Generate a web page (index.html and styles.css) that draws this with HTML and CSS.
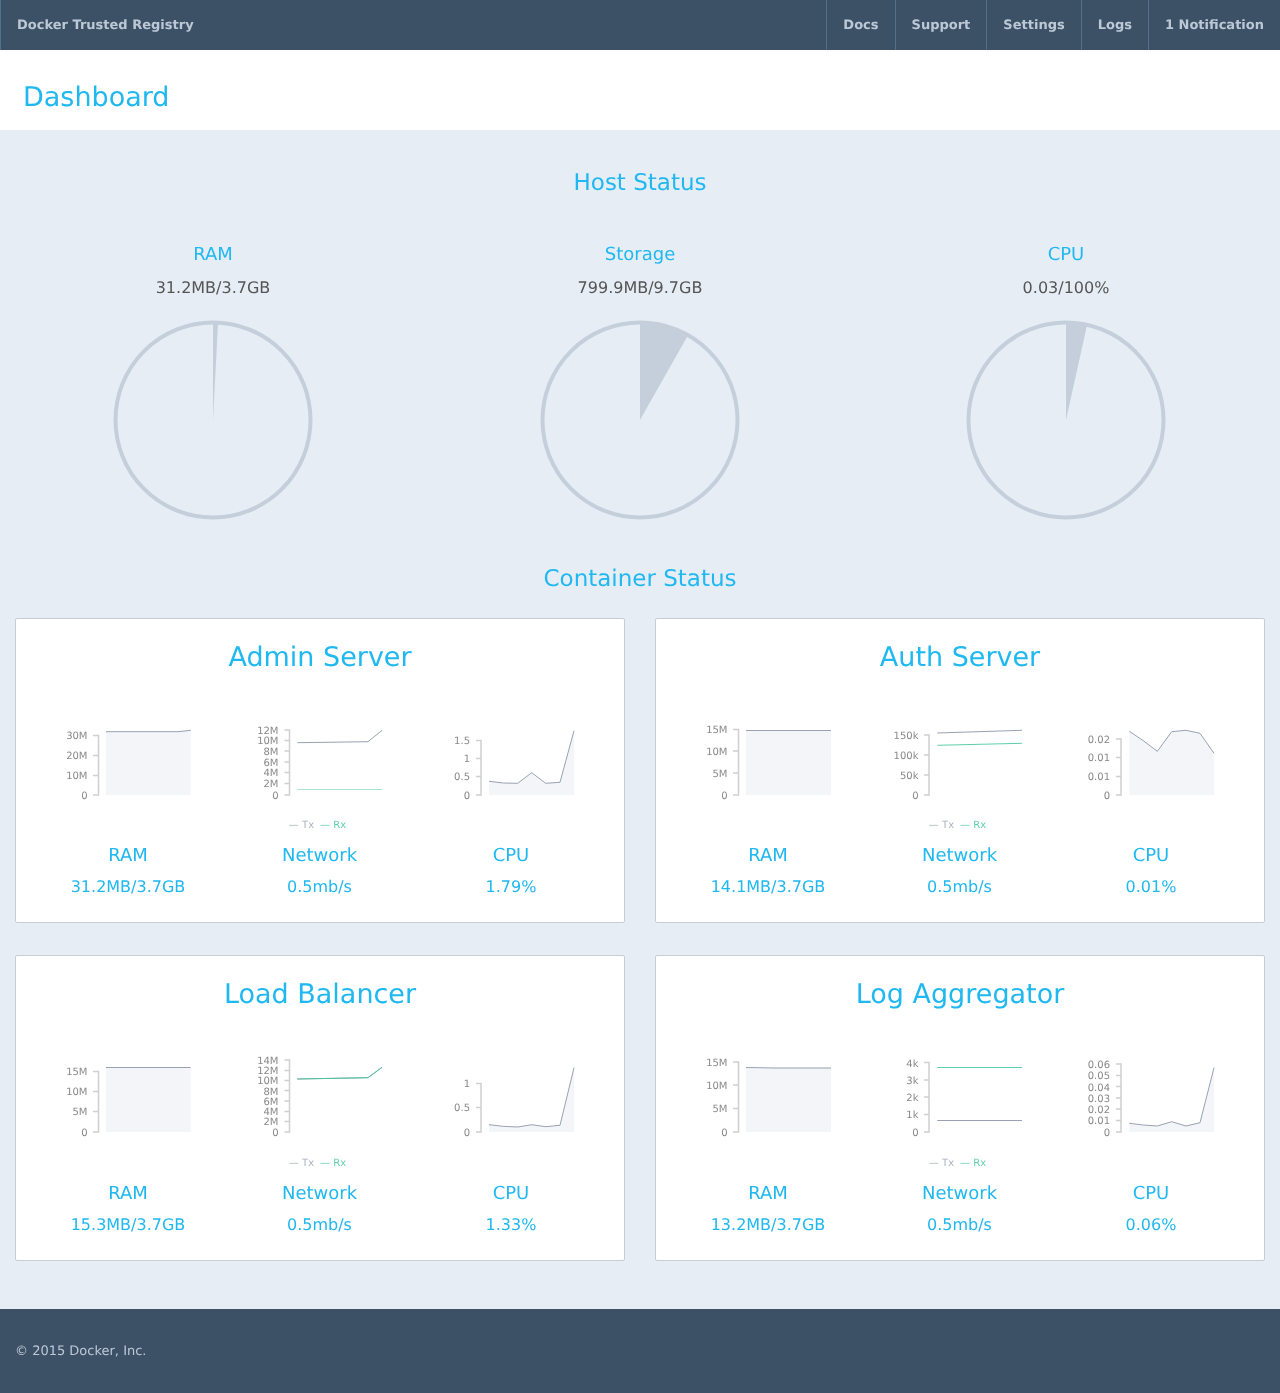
FILE: index.html

```html
<!DOCTYPE html>
<html lang="en">
<head>
  <meta charset="UTF-8">
  <meta name="viewport" content="width=device-width, initial-scale=1.0">
  <title>Docker Trusted Registry</title>
  <link rel="stylesheet" href="styles.css">
</head>
<body>

  <!-- Top bar -->
  <div class="topbar">
    <a class="brand">Docker Trusted Registry</a>
    <div class="nav">
      <a class="nav-item">Docs</a>
      <a class="nav-item">Support</a>
      <a class="nav-item">Settings</a>
      <a class="nav-item">Logs</a>
      <a class="nav-item">1 Notification</a>
    </div>
  </div>

  <div class="page-title">Dashboard</div>

  <div class="content">

    <!-- Host status -->
    <div class="section-title host-title">Host Status</div>
    <div class="host-row">
      <div class="host-col">
        <div class="host-label">RAM</div>
        <div class="host-value">31.2MB/3.7GB</div>
        <svg class="pie" viewBox="0 0 200 200">
          <circle class="pie-ring" cx="100" cy="100" r="97.5"/>
          <path class="pie-slice" d="M100 100 L100 4 A96 96 0 0 1 105 4.1 Z"/>
        </svg>
      </div>
      <div class="host-col">
        <div class="host-label">Storage</div>
        <div class="host-value">799.9MB/9.7GB</div>
        <svg class="pie" viewBox="0 0 200 200">
          <circle class="pie-ring" cx="100" cy="100" r="97.5"/>
          <path class="pie-slice" d="M100 100 L100 4 A96 96 0 0 1 147.3 16.4 Z"/>
        </svg>
      </div>
      <div class="host-col">
        <div class="host-label">CPU</div>
        <div class="host-value">0.03/100%</div>
        <svg class="pie" viewBox="0 0 200 200">
          <circle class="pie-ring" cx="100" cy="100" r="97.5"/>
          <path class="pie-slice" d="M100 100 L100 4 A96 96 0 0 1 120.8 6.3 Z"/>
        </svg>
      </div>
    </div>

    <!-- Container status -->
    <div class="section-title container-title">Container Status</div>
    <div class="cards">

      <div class="card">
        <div class="card-title">Admin Server</div>
        <div class="charts">
          <svg class="chart" viewBox="32 715 192 90">
            <path class="axis" d="M93 735.5 H98.5 V795 H93 M93 755.5 H98.5 M93 775.5 H98.5"/>
            <text class="tick" x="87.5" y="739">30M</text>
            <text class="tick" x="87.5" y="759">20M</text>
            <text class="tick" x="87.5" y="779">10M</text>
            <text class="tick" x="87.5" y="799">0</text>
            <path class="area" d="M106 731.7 L178 731.7 L190.7 730.3 V795 H106 Z"/>
            <polyline class="line" points="106,731.7 178,731.7 190.7,730.3"/>
          </svg>
          <svg class="chart" viewBox="224 715 191 90">
            <path class="axis" d="M284.5 730 H289.5 V795 H284.5 M284.5 740.5 H289.5 M284.5 751 H289.5 M284.5 762 H289.5 M284.5 772.5 H289.5 M284.5 783.5 H289.5"/>
            <text class="tick" x="278.5" y="733.5">12M</text>
            <text class="tick" x="278.5" y="744">10M</text>
            <text class="tick" x="278.5" y="754.5">8M</text>
            <text class="tick" x="278.5" y="765.5">6M</text>
            <text class="tick" x="278.5" y="776">4M</text>
            <text class="tick" x="278.5" y="787">2M</text>
            <text class="tick" x="278.5" y="799">0</text>
            <polyline class="line" points="297.3,742.7 368,741.7 382,730.3"/>
            <polyline class="line-rx faint" points="297.3,789.5 382,789.5"/>
          </svg>
          <svg class="chart" viewBox="415 715 192 90">
            <path class="axis" d="M476 740.5 H481 V795 H476 M476 758.5 H481 M476 776.5 H481"/>
            <text class="tick" x="470" y="744">1.5</text>
            <text class="tick" x="470" y="762">1</text>
            <text class="tick" x="470" y="780">0.5</text>
            <text class="tick" x="470" y="799">0</text>
            <path class="area" d="M489 781.3 L503.3 783 L517.7 783.3 L531.7 772.7 L545.7 783.3 L560 782.3 L574 730.7 V795 H489 Z"/>
            <polyline class="line" points="489,781.3 503.3,783 517.7,783.3 531.7,772.7 545.7,783.3 560,782.3 574,730.7"/>
          </svg>
        </div>
        <div class="legend"><span class="legend-tx">— Tx</span><span class="legend-rx">— Rx</span></div>
        <div class="stats">
          <div class="stat"><div class="stat-label">RAM</div><div class="stat-value">31.2MB/3.7GB</div></div>
          <div class="stat"><div class="stat-label">Network</div><div class="stat-value">0.5mb/s</div></div>
          <div class="stat"><div class="stat-label">CPU</div><div class="stat-value">1.79%</div></div>
        </div>
      </div>

      <div class="card">
        <div class="card-title">Auth Server</div>
        <div class="charts">
          <svg class="chart" viewBox="672 715 192 90">
            <path class="axis" d="M733 729.5 H738.5 V795 H733 M733 751 H738.5 M733 773 H738.5"/>
            <text class="tick" x="727.5" y="733">15M</text>
            <text class="tick" x="727.5" y="755">10M</text>
            <text class="tick" x="727.5" y="777">5M</text>
            <text class="tick" x="727.5" y="799">0</text>
            <path class="area" d="M746 730.5 H831 V795 H746 Z"/>
            <polyline class="line" points="746,730.5 831,730.5"/>
          </svg>
          <svg class="chart" viewBox="864 715 191 90">
            <path class="axis" d="M924 735 H929 V795 H924 M924 755 H929 M924 775 H929"/>
            <text class="tick" x="918.5" y="739">150k</text>
            <text class="tick" x="918.5" y="759">100k</text>
            <text class="tick" x="918.5" y="779">50k</text>
            <text class="tick" x="918.5" y="799">0</text>
            <polyline class="line" points="937.3,733 1022,730.3"/>
            <polyline class="line-rx" points="937.3,745.3 1022,743.3"/>
          </svg>
          <svg class="chart" viewBox="1055 715 192 90">
            <path class="axis" d="M1116 739 H1121 V795 H1116 M1116 757.5 H1121 M1116 776.5 H1121"/>
            <text class="tick" x="1110" y="743">0.02</text>
            <text class="tick" x="1110" y="761">0.01</text>
            <text class="tick" x="1110" y="780">0.01</text>
            <text class="tick" x="1110" y="799">0</text>
            <path class="area" d="M1129.3 731.3 L1143.3 740.7 L1157.3 751.3 L1171.7 731.7 L1186 730.3 L1200 733.3 L1214 753.3 V795 H1129.3 Z"/>
            <polyline class="line" points="1129.3,731.3 1143.3,740.7 1157.3,751.3 1171.7,731.7 1186,730.3 1200,733.3 1214,753.3"/>
          </svg>
        </div>
        <div class="legend"><span class="legend-tx">— Tx</span><span class="legend-rx">— Rx</span></div>
        <div class="stats">
          <div class="stat"><div class="stat-label">RAM</div><div class="stat-value">14.1MB/3.7GB</div></div>
          <div class="stat"><div class="stat-label">Network</div><div class="stat-value">0.5mb/s</div></div>
          <div class="stat"><div class="stat-label">CPU</div><div class="stat-value">0.01%</div></div>
        </div>
      </div>

      <div class="card">
        <div class="card-title">Load Balancer</div>
        <div class="charts">
          <svg class="chart" viewBox="32 1052 192 90">
            <path class="axis" d="M93 1071.5 H98.5 V1132 H93 M93 1091.5 H98.5 M93 1111.5 H98.5"/>
            <text class="tick" x="87.5" y="1075">15M</text>
            <text class="tick" x="87.5" y="1095">10M</text>
            <text class="tick" x="87.5" y="1115">5M</text>
            <text class="tick" x="87.5" y="1136">0</text>
            <path class="area" d="M106 1067.5 H190.7 V1132 H106 Z"/>
            <polyline class="line" points="106,1067.5 190.7,1067.5"/>
          </svg>
          <svg class="chart" viewBox="224 1052 191 90">
            <path class="axis" d="M284.5 1060 H289.5 V1132 H284.5 M284.5 1070.5 H289.5 M284.5 1080.5 H289.5 M284.5 1090.5 H289.5 M284.5 1101 H289.5 M284.5 1111.5 H289.5 M284.5 1121.5 H289.5"/>
            <text class="tick" x="278.5" y="1064">14M</text>
            <text class="tick" x="278.5" y="1074">12M</text>
            <text class="tick" x="278.5" y="1084">10M</text>
            <text class="tick" x="278.5" y="1094.5">8M</text>
            <text class="tick" x="278.5" y="1105">6M</text>
            <text class="tick" x="278.5" y="1115">4M</text>
            <text class="tick" x="278.5" y="1125">2M</text>
            <text class="tick" x="278.5" y="1136">0</text>
            <polyline class="line" points="297.3,1079 368,1077.7 382,1067.3"/>
            <polyline class="line-rx" points="297.3,1079 368,1077.7 382,1067.3"/>
          </svg>
          <svg class="chart" viewBox="415 1052 192 90">
            <path class="axis" d="M476 1083.5 H481 V1132 H476 M476 1107.5 H481"/>
            <text class="tick" x="470" y="1087">1</text>
            <text class="tick" x="470" y="1111">0.5</text>
            <text class="tick" x="470" y="1136">0</text>
            <path class="area" d="M489 1124.7 L503.3 1126.3 L517.7 1127 L531.7 1124.7 L545.7 1126.7 L560 1125.3 L574 1067.7 V1132 H489 Z"/>
            <polyline class="line" points="489,1124.7 503.3,1126.3 517.7,1127 531.7,1124.7 545.7,1126.7 560,1125.3 574,1067.7"/>
          </svg>
        </div>
        <div class="legend"><span class="legend-tx">— Tx</span><span class="legend-rx">— Rx</span></div>
        <div class="stats">
          <div class="stat"><div class="stat-label">RAM</div><div class="stat-value">15.3MB/3.7GB</div></div>
          <div class="stat"><div class="stat-label">Network</div><div class="stat-value">0.5mb/s</div></div>
          <div class="stat"><div class="stat-label">CPU</div><div class="stat-value">1.33%</div></div>
        </div>
      </div>

      <div class="card">
        <div class="card-title">Log Aggregator</div>
        <div class="charts">
          <svg class="chart" viewBox="672 1052 192 90">
            <path class="axis" d="M733 1062 H738.5 V1132 H733 M733 1085 H738.5 M733 1108.5 H738.5"/>
            <text class="tick" x="727.5" y="1066">15M</text>
            <text class="tick" x="727.5" y="1089">10M</text>
            <text class="tick" x="727.5" y="1112">5M</text>
            <text class="tick" x="727.5" y="1136">0</text>
            <path class="area" d="M746 1067.5 L775 1068 H831 V1132 H746 Z"/>
            <polyline class="line" points="746,1067.5 775,1068 831,1068"/>
          </svg>
          <svg class="chart" viewBox="864 1052 191 90">
            <path class="axis" d="M924 1062.5 H929 V1132 H924 M924 1080 H929 M924 1097 H929 M924 1114.5 H929"/>
            <text class="tick" x="918.5" y="1066.5">4k</text>
            <text class="tick" x="918.5" y="1084">3k</text>
            <text class="tick" x="918.5" y="1101">2k</text>
            <text class="tick" x="918.5" y="1118">1k</text>
            <text class="tick" x="918.5" y="1136">0</text>
            <polyline class="line" points="937.3,1120.5 1022,1120.5"/>
            <polyline class="line-rx" points="937.3,1067.5 1022,1067.5"/>
          </svg>
          <svg class="chart" viewBox="1055 1052 192 90">
            <path class="axis" d="M1116 1064 H1121 V1132 H1116 M1116 1075.5 H1121 M1116 1086.5 H1121 M1116 1098 H1121 M1116 1109 H1121 M1116 1120.5 H1121"/>
            <text class="tick" x="1110" y="1068">0.06</text>
            <text class="tick" x="1110" y="1079">0.05</text>
            <text class="tick" x="1110" y="1090.5">0.04</text>
            <text class="tick" x="1110" y="1102">0.03</text>
            <text class="tick" x="1110" y="1113">0.02</text>
            <text class="tick" x="1110" y="1124">0.01</text>
            <text class="tick" x="1110" y="1136">0</text>
            <path class="area" d="M1129.3 1123.3 L1143.3 1125 L1157.3 1126 L1171.7 1121.7 L1186 1126 L1200 1122.7 L1214 1067.7 V1132 H1129.3 Z"/>
            <polyline class="line" points="1129.3,1123.3 1143.3,1125 1157.3,1126 1171.7,1121.7 1186,1126 1200,1122.7 1214,1067.7"/>
          </svg>
        </div>
        <div class="legend"><span class="legend-tx">— Tx</span><span class="legend-rx">— Rx</span></div>
        <div class="stats">
          <div class="stat"><div class="stat-label">RAM</div><div class="stat-value">13.2MB/3.7GB</div></div>
          <div class="stat"><div class="stat-label">Network</div><div class="stat-value">0.5mb/s</div></div>
          <div class="stat"><div class="stat-label">CPU</div><div class="stat-value">0.06%</div></div>
        </div>
      </div>

    </div>
  </div>

  <div class="footer">© 2015 Docker, Inc.</div>

</body>
</html>
```

FILE: styles.css

```css
body {
  font-family: "DejaVu Sans", sans-serif;
  margin: 0;
  padding: 0;
  color: #555;
  background-color: #e6edf5;
  text-rendering: geometricPrecision;
  will-change: transform;
}

/* Top bar */
.topbar {
  display: flex;
  justify-content: space-between;
  height: 50px;
  background-color: #3d5166;
  color: #bcc8d6;
  font-size: 13px;
  font-weight: bold;
}

.brand,
.nav-item {
  padding: 2px 16px 0;
  border-left: 1px solid #54708c;
  line-height: 48px;
}

.nav {
  display: flex;
}

.page-title {
  height: 80px;
  padding-left: 23px;
  background-color: white;
  color: #1fb8f0;
  font-size: 27px;
  line-height: 95px;
}

.content {
  height: 1179px;
}

.section-title {
  color: #1fb8f0;
  font-size: 23px;
  line-height: 26px;
  text-align: center;
}

.host-title {
  padding-top: 40px;
}

/* Host status */
.host-row {
  display: grid;
  grid-template-columns: 426px 428px 424px;
  margin-top: 49px;
  text-align: center;
}

.host-label {
  color: #1fb8f0;
  font-size: 18px;
  line-height: 20px;
}

.host-value {
  margin-top: 13px;
  font-size: 16px;
  line-height: 20px;
}

.pie {
  display: block;
  width: 200px;
  height: 200px;
  margin: 22px auto 0;
}

.pie-ring {
  fill: none;
  stroke: #c5cfdc;
  stroke-width: 4;
}

.pie-slice {
  fill: #c5cfdc;
}

.container-title {
  margin-top: 46px;
}

/* Container cards */
.cards {
  display: grid;
  grid-template-columns: 610px 610px;
  grid-template-rows: 305px 306px;
  gap: 32px 30px;
  margin-top: 26px;
  padding: 0 15px;
}

.card {
  box-sizing: border-box;
  padding: 0 16px;
  background-color: white;
  border: 1px solid #c8ccd4;
  border-radius: 2px;
}

.card-title {
  padding-top: 23px;
  color: #1fb8f0;
  font-size: 27px;
  line-height: 32px;
  text-align: center;
}

.charts {
  display: grid;
  grid-template-columns: 192px 191px 192px;
  margin-top: 41px;
}

.chart {
  display: block;
  width: 100%;
  height: 90px;
}

.axis {
  fill: none;
  stroke: #d0d0d0;
  stroke-width: 1.5;
}

.tick {
  fill: #888;
  font-size: 10px;
  text-anchor: end;
}

.area {
  fill: #f3f5f9;
}

.line {
  fill: none;
  stroke: #98a2b2;
  stroke-width: 1;
}

.line-rx {
  fill: none;
  stroke: #3fc79a;
  stroke-width: 1;
  stroke-opacity: 0.85;
}

.line-rx.faint {
  stroke-opacity: 0.45;
}

.legend {
  margin-top: 14px;
  padding-right: 5px;
  font-size: 10px;
  line-height: 14px;
  text-align: center;
}

.card:nth-child(n+3) .legend {
  margin-top: 15px;
}

.legend-tx {
  color: #aab2bd;
}

.legend-rx {
  margin-left: 6px;
  color: #5fd0a8;
}

.stats {
  display: grid;
  grid-template-columns: 192px 191px 192px;
  margin-top: 13px;
  color: #1fb8f0;
  text-align: center;
}

.stat-label {
  font-size: 18px;
  line-height: 20px;
}

.stat-value {
  margin-top: 11px;
  font-size: 16px;
  line-height: 20px;
}

.footer {
  height: 82px;
  padding: 2px 0 0 15px;
  background-color: #3d5166;
  color: #bcc8d6;
  font-size: 13px;
  line-height: 82px;
}
```
